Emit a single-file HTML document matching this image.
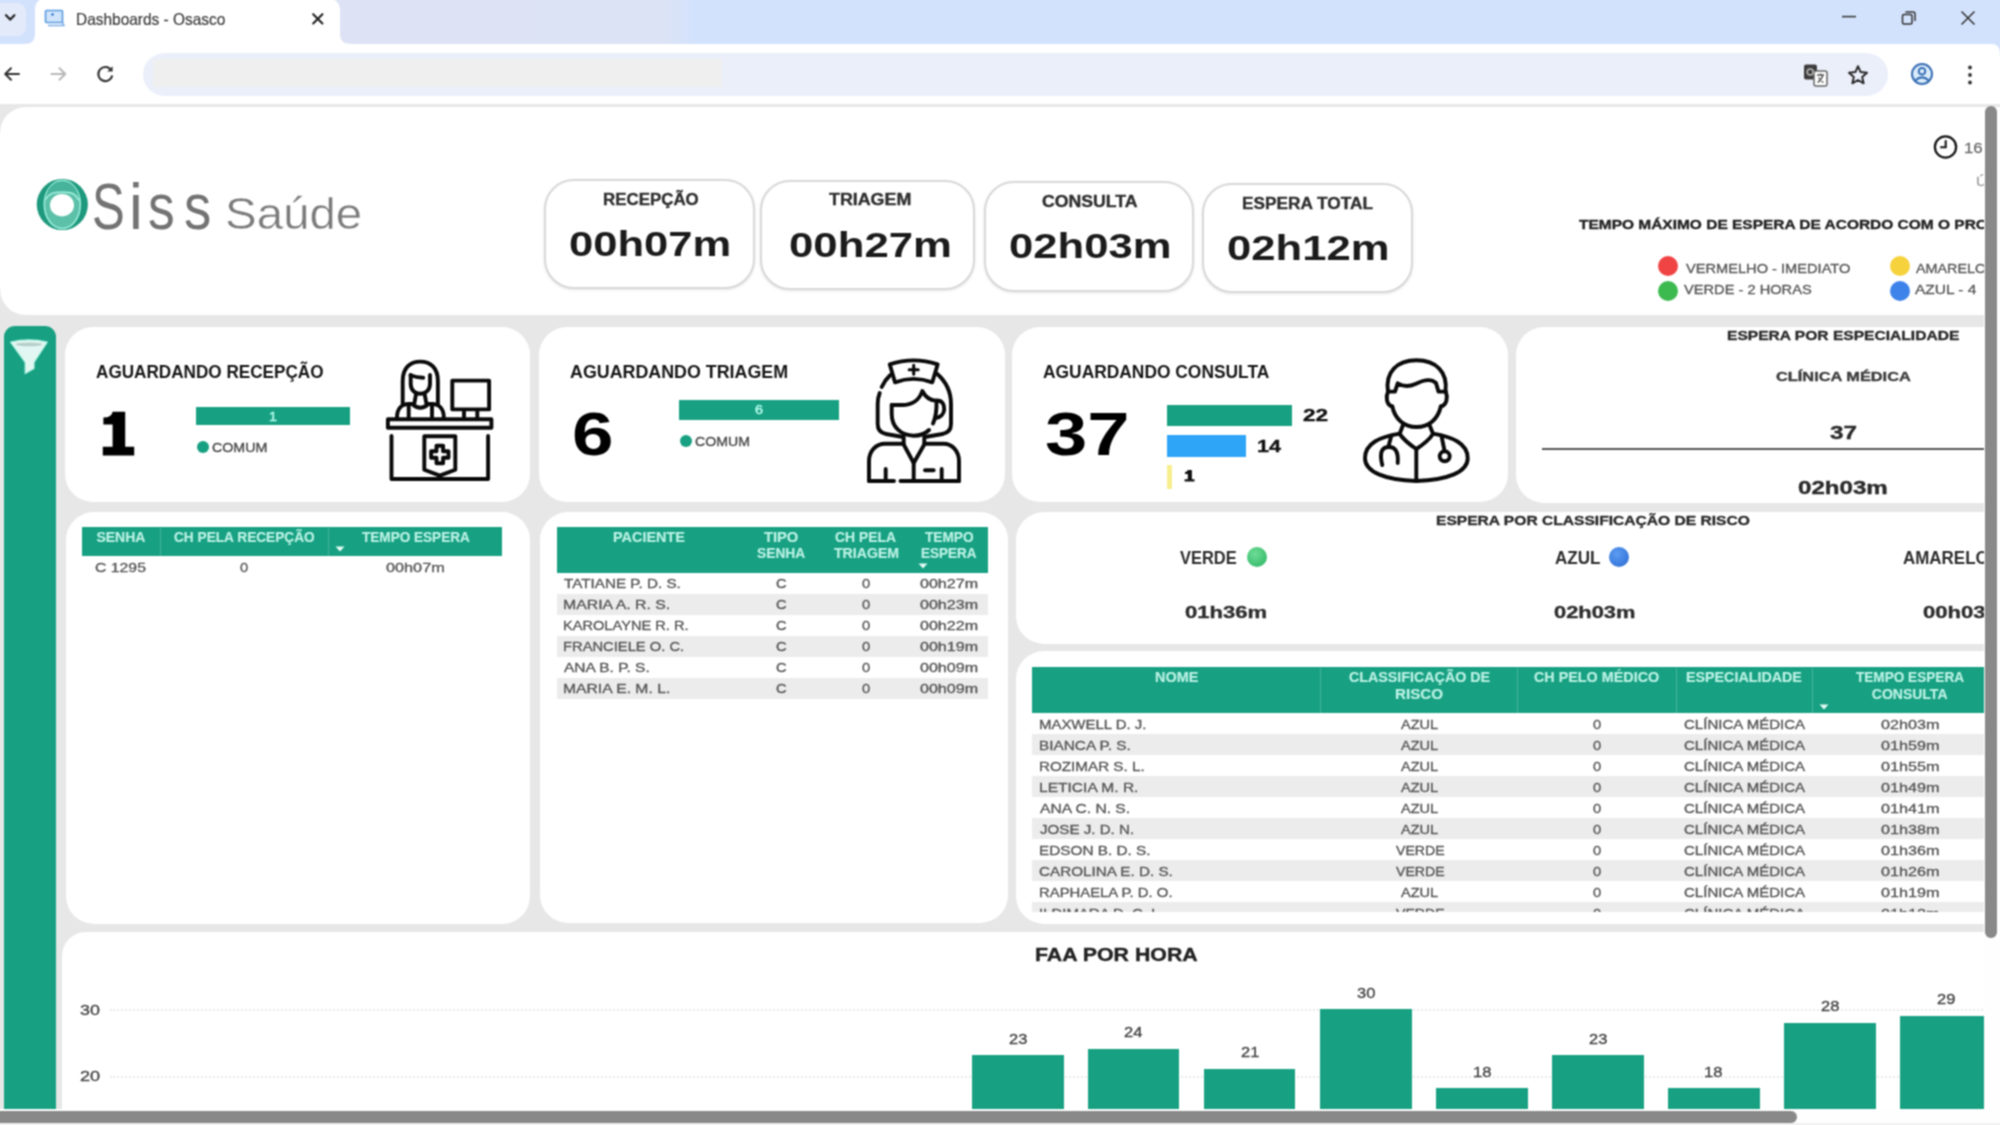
<!DOCTYPE html>
<html><head><meta charset="utf-8"><title>Dashboards - Osasco</title>
<style>
html,body{margin:0;padding:0}
body{width:2000px;height:1125px;overflow:hidden;position:relative;background:#fff;font-family:"Liberation Sans",sans-serif}
.t{position:absolute;white-space:nowrap;line-height:1;transform-origin:left top;font-family:"Liberation Sans",sans-serif}
.b{position:absolute}
svg{position:absolute;overflow:visible}
</style></head><body>
<svg width="0" height="0" style="position:absolute"><filter id="sf" x="0" y="0" width="100%" height="100%" color-interpolation-filters="sRGB"><feConvolveMatrix order="3" kernelMatrix="1 2 1 2 4 2 1 2 1" divisor="16" edgeMode="duplicate" preserveAlpha="true"/></filter></svg>
<div class="b" style="left:-8px;top:-8px;width:2016px;height:1141px;background:#fff;filter:url(#sf)"><div class="b" style="left:8px;top:8px;width:2000px;height:1125px">
<div class="b" style="left:-8.0px;top:-8.0px;width:2016.0px;height:64.0px;background:#d3e2fc;"></div>
<div class="b" style="left:330.0px;top:-8.0px;width:363.0px;height:52.0px;background:linear-gradient(90deg,#dde3f4 0,#dce3f5 92%,#d3e2fc 100%);"></div>
<div class="b" style="left:-8.0px;top:2.5px;width:34.0px;height:33.5px;background:#e3eafa;border-radius:9px"></div>
<svg style="left:4px;top:13px" width="14" height="10" viewBox="0 0 14 10"><path d="M2 2.2 L6.2 6.6 L10.4 2.2" fill="none" stroke="#222" stroke-width="2.2" stroke-linecap="round" stroke-linejoin="round"/></svg>
<svg style="left:24px;top:0" width="330" height="44" viewBox="0 0 330 44"><path d="M0 44 C8 44 11 41 11 33 L11 10 C11 3 15 -2 22 -2 L304 -2 C311 -2 316 3 316 10 L316 33 C316 41 319 44 328 44 Z" fill="#fff"/></svg>
<svg style="left:44px;top:9px" width="24" height="20" viewBox="0 0 24 20"><rect x="1.5" y="1.5" width="17" height="12" rx="1" fill="#cfe4fb" stroke="#5b9be0" stroke-width="1.6"/><path d="M4 16.5 H21 M19 13 V16" stroke="#7fb0e8" stroke-width="1.6" fill="none"/><path d="M7 5.5 h3 M8.5 4 v3" stroke="#3a7bd0" stroke-width="1.2"/></svg>
<span class="t" style="left:75.7px;top:11.0px;font-size:16.5px;color:#3d3d3d;transform:scaleX(0.936);-webkit-text-stroke:0.2px;">Dashboards - Osasco</span>
<svg style="left:311px;top:12px" width="14" height="14" viewBox="0 0 14 14"><path d="M2.2 2.2 L11.4 11.4 M11.4 2.2 L2.2 11.4" stroke="#222" stroke-width="2.1" stroke-linecap="round"/></svg>
<svg style="left:1838px;top:8px" width="140" height="22" viewBox="0 0 140 22"><path d="M4 8.6 H18" stroke="#333" stroke-width="1.5"/><rect x="64.5" y="6.5" width="9.5" height="9.5" rx="1.5" fill="none" stroke="#333" stroke-width="1.5"/><path d="M67.5 4 H75 Q77 4 77 6 V13" fill="none" stroke="#333" stroke-width="1.5"/><path d="M123.5 3.5 L136.5 16.5 M136.5 3.5 L123.5 16.5" stroke="#333" stroke-width="1.5"/></svg>
<div class="b" style="left:-8.0px;top:44.0px;width:2008.0px;height:61.0px;background:#fff;border-radius:0 8px 0 0"></div>
<div class="b" style="left:-8.0px;top:104.0px;width:2016.0px;height:2.6px;background:#e8e8e8;"></div>
<div class="b" style="left:143.0px;top:53.0px;width:1744.5px;height:43.0px;background:#ebeffa;border-radius:22px"></div>
<div class="b" style="left:153.0px;top:59.0px;width:569.0px;height:28.0px;background:#efefef;border-radius:2px"></div>
<svg style="left:2px;top:64px" width="120" height="20" viewBox="0 0 120 20"><path d="M17 10 H3.5 M9 4.3 L3.2 10 L9 15.7" fill="none" stroke="#333" stroke-width="2" stroke-linecap="round" stroke-linejoin="round"/><path d="M49.5 10 H63 M57.5 4.3 L63.3 10 L57.5 15.7" fill="none" stroke="#b9b9b9" stroke-width="2" stroke-linecap="round" stroke-linejoin="round"/><path d="M109.2 6.2 A7 7 0 1 0 110.2 11.5" fill="none" stroke="#333" stroke-width="2.1"/><path d="M110.6 2.2 V7.6 H105.2 Z" fill="#333"/></svg>
<svg style="left:1803px;top:63px" width="26" height="26" viewBox="0 0 26 26"><rect x="1" y="1.5" width="13" height="15" rx="2" fill="#3d3d3d"/><rect x="11" y="8" width="13" height="15" rx="2" fill="#fff" stroke="#666" stroke-width="1.5"/><circle cx="7.2" cy="9" r="3" fill="none" stroke="#bbb" stroke-width="1.5"/><path d="M14 12 H21 M17.5 10.5 V12 M20 12 Q18.5 17 14.5 19.5 M15.5 14.5 Q17.5 18 20.5 19.5" fill="none" stroke="#555" stroke-width="1.3"/></svg>
<svg style="left:1846px;top:63px" width="24" height="24" viewBox="0 0 24 24"><path d="M12 3.2 L14.6 9.1 L21 9.7 L16.2 14 L17.6 20.3 L12 17 L6.4 20.3 L7.8 14 L3 9.7 L9.4 9.1 Z" fill="none" stroke="#2b2b2b" stroke-width="2" stroke-linejoin="round"/></svg>
<svg style="left:1909px;top:61px" width="26" height="26" viewBox="0 0 26 26"><circle cx="13" cy="13" r="10" fill="#d9ecfb" stroke="#3a6fb4" stroke-width="2"/><circle cx="13" cy="10.3" r="3.3" fill="none" stroke="#3a6fb4" stroke-width="2"/><path d="M6.3 19.5 Q13 13.2 19.7 19.5" fill="none" stroke="#3a6fb4" stroke-width="2"/></svg>
<svg style="left:1964px;top:63px" width="12" height="24" viewBox="0 0 12 24"><circle cx="6" cy="4.5" r="1.9" fill="#333"/><circle cx="6" cy="12" r="1.9" fill="#333"/><circle cx="6" cy="19.5" r="1.9" fill="#333"/></svg>
<div class="b" style="left:-8px;top:105px;width:1992px;height:1003.6px;overflow:hidden;background:#e7e7e7">
<div class="b" style="left:8px;top:-105px;width:1984px;height:1110px">
<div class="b" style="left:0.0px;top:106.5px;width:2020.0px;height:208.5px;background:#fff;border-radius:26px"></div>
<div class="b" style="left:-8.0px;top:134.0px;width:9.0px;height:153.0px;background:#fff;"></div>
<svg style="left:32px;top:175px" width="60" height="60" viewBox="0 0 60 60"><circle cx="30.3" cy="29.5" r="25.6" fill="#1f997d"/><ellipse cx="30.3" cy="29.5" rx="18" ry="24" fill="#5dc0a9" stroke="#9cf0de" stroke-width="1.5"/><path d="M13.2 24 C16 10 23 6.2 30.3 6.2 C37.6 6.2 44.6 10 47.4 24 C42 15.5 36 17.3 30.3 17.3 C24.6 17.3 18.6 15.5 13.2 24 Z" fill="#47b39b"/><path d="M13.6 24.5 C18 16.5 24 17.3 30.3 17.3 C36.6 17.3 42.6 16.5 47 25.5" fill="none" stroke="#a6f3e2" stroke-width="1.4"/><ellipse cx="30" cy="30.2" rx="12" ry="11.2" fill="#fff"/></svg>
<span class="t" style="left:92.4px;top:174.5px;font-size:52.5px;color:#737373;transform:scale(0.936,1.235);">S</span>
<span class="t" style="left:128.6px;top:174.5px;font-size:52.5px;color:#737373;transform:scale(1.185,1.235);">i</span>
<span class="t" style="left:148.2px;top:174.5px;font-size:52.5px;color:#737373;transform:scale(1.017,1.235);">s</span>
<span class="t" style="left:184.1px;top:174.5px;font-size:52.5px;color:#737373;transform:scale(1.039,1.235);">s</span>
<span class="t" style="left:225.4px;top:191.0px;font-size:45px;color:#7b7b7b;transform:scaleX(1.054);-webkit-text-stroke:0.5px #fff;">Saúde</span>
<div class="b" style="left:544.0px;top:178.5px;width:211.0px;height:110.0px;background:#fff;border:2px solid #d8d8d8;border-radius:30px;box-sizing:border-box;box-shadow:0 1px 3px rgba(0,0,0,.10)"></div>
<div class="b" style="left:760.0px;top:179.5px;width:215.0px;height:110.5px;background:#fff;border:2px solid #d8d8d8;border-radius:30px;box-sizing:border-box;box-shadow:0 1px 3px rgba(0,0,0,.10)"></div>
<div class="b" style="left:983.5px;top:181.0px;width:210.5px;height:110.5px;background:#fff;border:2px solid #d8d8d8;border-radius:30px;box-sizing:border-box;box-shadow:0 1px 3px rgba(0,0,0,.10)"></div>
<div class="b" style="left:1202.0px;top:182.5px;width:210.5px;height:110.5px;background:#fff;border:2px solid #d8d8d8;border-radius:30px;box-sizing:border-box;box-shadow:0 1px 3px rgba(0,0,0,.10)"></div>
<span class="t" style="left:602.5px;top:192.0px;font-size:16px;font-weight:700;color:#2e2e2e;transform:scaleX(1.056);-webkit-text-stroke:0.35px;">RECEPÇÃO</span>
<span class="t" style="left:569.3px;top:226.0px;font-size:35px;font-weight:700;color:#1b1b1b;transform:scaleX(1.244);">00h07m</span>
<span class="t" style="left:829.3px;top:192.0px;font-size:16px;font-weight:700;color:#2e2e2e;transform:scaleX(1.115);-webkit-text-stroke:0.35px;">TRIAGEM</span>
<span class="t" style="left:788.5px;top:227.0px;font-size:35px;font-weight:700;color:#1b1b1b;transform:scaleX(1.250);">00h27m</span>
<span class="t" style="left:1042.2px;top:194.0px;font-size:16px;font-weight:700;color:#2e2e2e;transform:scaleX(1.105);-webkit-text-stroke:0.35px;">CONSULTA</span>
<span class="t" style="left:1009.2px;top:228.0px;font-size:35px;font-weight:700;color:#1b1b1b;transform:scaleX(1.246);">02h03m</span>
<span class="t" style="left:1241.9px;top:196.0px;font-size:16px;font-weight:700;color:#2e2e2e;transform:scaleX(1.078);-webkit-text-stroke:0.35px;">ESPERA TOTAL</span>
<span class="t" style="left:1227.2px;top:230.0px;font-size:35px;font-weight:700;color:#1b1b1b;transform:scaleX(1.246);">02h12m</span>
<svg style="left:1932px;top:134px" width="27" height="27" viewBox="0 0 27 27"><circle cx="13.5" cy="13" r="10.6" fill="none" stroke="#161616" stroke-width="2.3"/><path d="M13.7 6.2 V13.3 H8.2" fill="none" stroke="#161616" stroke-width="2.1"/></svg>
<span class="t" style="left:1964.2px;top:140.0px;font-size:15px;color:#6a6a6a;transform:scaleX(1.120);-webkit-text-stroke:0.3px;">16:32</span>
<span class="t" style="left:1975.9px;top:175.0px;font-size:13.5px;color:#9a9a9a;transform:scaleX(1.100);-webkit-text-stroke:0.3px;">Última</span>
<span class="t" style="left:1579.3px;top:218.0px;font-size:13.5px;font-weight:700;color:#222;transform:scaleX(1.146);-webkit-text-stroke:0.35px;">TEMPO MÁXIMO DE ESPERA DE ACORDO COM O PROTOCOLO</span>
<div class="b" style="left:1658.0px;top:256.2px;width:20.0px;height:20.0px;background:#f04444;border-radius:50%"></div>
<div class="b" style="left:1658.0px;top:281.2px;width:20.0px;height:20.0px;background:#3dba4f;border-radius:50%"></div>
<div class="b" style="left:1890.0px;top:256.0px;width:20.0px;height:20.0px;background:#f6d23d;border-radius:50%"></div>
<div class="b" style="left:1890.0px;top:281.0px;width:20.0px;height:20.0px;background:#3d83ea;border-radius:50%"></div>
<span class="t" style="left:1686.3px;top:262.0px;font-size:13.5px;color:#555;transform:scaleX(1.083);-webkit-text-stroke:0.3px;">VERMELHO - IMEDIATO</span>
<span class="t" style="left:1683.8px;top:283.0px;font-size:13.5px;color:#555;transform:scaleX(1.084);-webkit-text-stroke:0.3px;">VERDE - 2 HORAS</span>
<span class="t" style="left:1915.8px;top:262.0px;font-size:13.5px;color:#555;transform:scaleX(1.063);-webkit-text-stroke:0.3px;">AMARELO - 1 HORA</span>
<span class="t" style="left:1915.0px;top:283.0px;font-size:13.5px;color:#555;transform:scaleX(1.147);-webkit-text-stroke:0.3px;">AZUL - 4</span>
<div class="b" style="left:3.5px;top:326.0px;width:52.3px;height:800.0px;background:#17a082;border-radius:11px 11px 0 0"></div>
<svg style="left:0px;top:330px" width="60" height="50" viewBox="0 330 60 50"><path d="M10.6 342.2 Q29 337.6 47.2 342.2 L34 362.3 L34 368.6 L25.2 373.6 L25.2 362.3 Z" fill="#e3f7f2" stroke="#b5f3e4" stroke-width="1.2" stroke-linejoin="round"/><ellipse cx="29" cy="344.4" rx="13" ry="1.9" fill="#b7cfca"/></svg>
<div class="b" style="left:64.8px;top:327.0px;width:465.7px;height:174.5px;background:#fff;border-radius:28px"></div>
<div class="b" style="left:539.0px;top:327.0px;width:465.7px;height:174.7px;background:#fff;border-radius:28px"></div>
<div class="b" style="left:1011.5px;top:327.0px;width:496.5px;height:174.5px;background:#fff;border-radius:28px"></div>
<div class="b" style="left:1515.7px;top:326.5px;width:520.0px;height:176.0px;background:#fff;border-radius:28px"></div>
<div class="b" style="left:65.5px;top:512.0px;width:464.0px;height:411.5px;background:#fff;border-radius:28px"></div>
<div class="b" style="left:540.0px;top:511.5px;width:467.5px;height:411.5px;background:#fff;border-radius:28px"></div>
<div class="b" style="left:1015.5px;top:511.5px;width:1020.0px;height:132.5px;background:#fff;border-radius:28px"></div>
<div class="b" style="left:1015.6px;top:651.3px;width:1020.0px;height:272.4px;background:#fff;border-radius:28px"></div>
<div class="b" style="left:62.0px;top:932.0px;width:2000.0px;height:220.0px;background:#fff;border-radius:24px"></div>
<span class="t" style="left:96.3px;top:362.0px;font-size:19px;font-weight:700;color:#161616;transform:scaleX(0.902);">AGUARDANDO RECEPÇÃO</span>
<svg style="left:100px;top:408px" width="40" height="50" viewBox="100 408 40 50"><path d="M112.6 411.7 H125.2 V446.8 H134.2 V455.4 H102.8 V446.8 H112.6 V424.4 H103.4 V417.6 Q112 417.4 112.6 411.7 Z" fill="#000"/></svg>
<div class="b" style="left:196.3px;top:407.3px;width:154.2px;height:18.0px;background:#17a082;"></div>
<span class="t" style="left:269.2px;top:411.0px;font-size:12.5px;color:#b4fbea;transform:scaleX(1.150);-webkit-text-stroke:0.4px;">1</span>
<div class="b" style="left:196.5px;top:441.3px;width:12.0px;height:12.0px;background:#17a082;border-radius:50%"></div>
<span class="t" style="left:211.8px;top:441.0px;font-size:13.5px;color:#444;transform:scaleX(1.054);-webkit-text-stroke:0.3px;">COMUM</span>
<span class="t" style="left:570.1px;top:362.0px;font-size:19px;font-weight:700;color:#161616;transform:scaleX(0.939);">AGUARDANDO TRIAGEM</span>
<span class="t" style="left:571.9px;top:404.0px;font-size:61px;font-weight:700;color:#000;transform:scaleX(1.224);">6</span>
<div class="b" style="left:679.0px;top:400.0px;width:160.2px;height:19.8px;background:#17a082;"></div>
<span class="t" style="left:754.9px;top:404.0px;font-size:12.5px;color:#b4fbea;transform:scaleX(1.150);-webkit-text-stroke:0.4px;">6</span>
<div class="b" style="left:680.0px;top:435.0px;width:12.0px;height:12.0px;background:#17a082;border-radius:50%"></div>
<span class="t" style="left:695.3px;top:435.0px;font-size:13.5px;color:#444;transform:scaleX(1.048);-webkit-text-stroke:0.3px;">COMUM</span>
<span class="t" style="left:1043.3px;top:362.0px;font-size:19px;font-weight:700;color:#161616;transform:scaleX(0.915);">AGUARDANDO CONSULTA</span>
<span class="t" style="left:1044.9px;top:404.0px;font-size:61px;font-weight:700;color:#000;transform:scaleX(1.246);">37</span>
<div class="b" style="left:1166.6px;top:404.6px;width:125.0px;height:21.8px;background:#17a082;"></div>
<div class="b" style="left:1166.6px;top:435.0px;width:79.5px;height:21.5px;background:#2fa5f8;"></div>
<div class="b" style="left:1166.6px;top:465.0px;width:5.8px;height:24.3px;background:#f7ee8e;"></div>
<span class="t" style="left:1303.0px;top:408.0px;font-size:16px;font-weight:700;color:#111;transform:scaleX(1.411);-webkit-text-stroke:0.35px;">22</span>
<span class="t" style="left:1257.1px;top:439.0px;font-size:16px;font-weight:700;color:#111;transform:scaleX(1.345);-webkit-text-stroke:0.35px;">14</span>
<svg style="left:1183px;top:468px" width="14" height="16" viewBox="1183 468 14 16"><path d="M1187.8 470 H1191.9 V479.2 H1194.5 V481.6 H1184.6 V479.2 H1187.8 V474 H1185 V472.1 Q1187.6 472 1187.8 470 Z" fill="#111"/></svg>
<span class="t" style="left:1727.0px;top:329.0px;font-size:13.5px;font-weight:700;color:#2a2a2a;transform:scaleX(1.154);-webkit-text-stroke:0.35px;">ESPERA POR ESPECIALIDADE</span>
<span class="t" style="left:1775.6px;top:370.0px;font-size:13px;font-weight:700;color:#3c3c3c;transform:scaleX(1.258);-webkit-text-stroke:0.35px;">CLÍNICA MÉDICA</span>
<span class="t" style="left:1829.6px;top:425.0px;font-size:17.5px;font-weight:700;color:#2a2a2a;transform:scaleX(1.388);-webkit-text-stroke:0.35px;">37</span>
<div class="b" style="left:1542.0px;top:448.0px;width:460.0px;height:1.5px;background:#555;"></div>
<span class="t" style="left:1798.3px;top:479.0px;font-size:18px;font-weight:700;color:#2a2a2a;transform:scaleX(1.339);-webkit-text-stroke:0.35px;">02h03m</span>
<span class="t" style="left:1436.0px;top:514.0px;font-size:13.5px;font-weight:700;color:#2a2a2a;transform:scaleX(1.155);-webkit-text-stroke:0.35px;">ESPERA POR CLASSIFICAÇÃO DE RISCO</span>
<span class="t" style="left:1180.4px;top:548.0px;font-size:19px;font-weight:700;color:#2d2d2d;transform:scaleX(0.866);">VERDE</span>
<span class="t" style="left:1555.1px;top:548.0px;font-size:19px;font-weight:700;color:#2d2d2d;transform:scaleX(0.896);">AZUL</span>
<span class="t" style="left:1902.6px;top:548.0px;font-size:19px;font-weight:700;color:#2d2d2d;transform:scaleX(0.892);">AMARELO</span>
<div class="b" style="left:1246.7px;top:546.7px;width:20.0px;height:20.0px;background:radial-gradient(circle at 40% 35%,#6fdc97 0,#46c577 55%,#35b168 100%);border-radius:50%"></div>
<div class="b" style="left:1609.2px;top:546.7px;width:20.0px;height:20.0px;background:radial-gradient(circle at 40% 35%,#5d9df2 0,#3f7fe0 55%,#2f6bcb 100%);border-radius:50%"></div>
<span class="t" style="left:1184.7px;top:604.0px;font-size:16.5px;font-weight:700;color:#2d2d2d;transform:scaleX(1.336);-webkit-text-stroke:0.35px;">01h36m</span>
<span class="t" style="left:1554.2px;top:604.0px;font-size:16.5px;font-weight:700;color:#2d2d2d;transform:scaleX(1.324);-webkit-text-stroke:0.35px;">02h03m</span>
<span class="t" style="left:1923.0px;top:604.0px;font-size:16.5px;font-weight:700;color:#2d2d2d;transform:scaleX(1.336);-webkit-text-stroke:0.35px;">00h03m</span>
<svg style="left:380px;top:355px" width="120" height="130" viewBox="380 355 120 130"><g fill="none" stroke="#0a0a0a" stroke-width="3.9" stroke-linecap="round" stroke-linejoin="round"><rect x="387.9" y="419.3" width="103.5" height="8.4"/><path d="M391.5 436 V479 H488.1 V436"/><path d="M424.3 436.3 H455.3 V469.7 L439.8 475.6 L424.3 469.7 Z"/><path d="M436.5 445.8 H443.1 V451.2 H448.5 V457.8 H443.1 V463.2 H436.5 V457.8 H431.1 V451.2 H436.5 Z"/><rect x="452.3" y="380.6" width="36.8" height="28.8"/><path d="M464 411 V418 M477.3 411 V418"/><path d="M402.7 404 V381 C402.7 368 410 361.6 420.3 361.6 C430.6 361.6 437.9 368 437.9 381 V404"/><path d="M410.7 375 V384 C410.7 390 415 393.7 420.3 393.7 C425.6 393.7 430 390 430 384 V375"/><path d="M410.5 375.3 Q416 377.6 423.2 377.7"/><path d="M416 394.3 L414.3 403.5 M424.7 394.3 L426.4 403.5"/><path d="M412.3 404 Q420.3 411.5 428.4 404"/><path d="M397 417.5 C397 408.5 402 404 408.7 404 H412.3 M428.4 404 H432 C438.7 404 443.8 408.5 443.8 417.5"/><path d="M408.7 404.6 V417.7 M432 404.6 V417.7"/></g></svg>
<svg style="left:860px;top:350px" width="110" height="140" viewBox="860 350 110 140"><g fill="none" stroke="#0a0a0a" stroke-width="3.9" stroke-linecap="round" stroke-linejoin="round"><path d="M889.7 364.3 Q913.7 356.5 937.7 364.3 L932.3 382.3 Q913.7 375.5 895 382.3 Z"/><path d="M909.2 369.7 H918.2 M913.7 365.2 V374.2" stroke-width="3.1"/><path d="M890.3 375 C886.5 378.5 883.8 382.5 881.7 387 M879.7 393 C878.3 396.5 877.7 400 877.7 404 V424 C877.7 430 880.5 433 886 434 L903 437"/><path d="M937 373.7 C946.5 382 951 393 951 404 V424 C951 430 948 433 942.5 434 L925 437"/><path d="M891.7 405 H902 C912 405 919.5 400 922.3 391 C926 398 931 400.5 936 400.6"/><path d="M891.7 405 V414 C891.7 427 901 435.7 913.7 435.7 C920 435.7 925.5 433.5 929 430 M933 423.5 C936 417 936.8 410 936.5 401"/><path d="M936 400.6 C942.5 400 944.6 405 944.2 409.5 C943.8 414 940.5 417.3 936.7 417.7"/><path d="M903.7 437 V443.7 M924.3 437 V443.7"/><path d="M903.3 443.7 L913.7 463 L924.7 443.7"/><path d="M913.7 463 V481"/><path d="M902.3 443.7 H885 C876 443.7 869 451 869 461 V481 M925.7 443.7 H943.7 C952 443.7 959 451 959 461 V481"/><path d="M869 481 H894 M900.5 481 H959"/><path d="M885.7 469 V481 M941.7 469 V481 M925 470.3 H933.7"/></g></svg>
<svg style="left:1355px;top:350px" width="125" height="140" viewBox="1355 350 125 140"><g fill="none" stroke="#0a0a0a" stroke-width="3.9" stroke-linecap="round" stroke-linejoin="round"><path d="M1388 391.5 C1385 372 1397 360.3 1416.5 360.3 C1436 360.3 1448 372 1445.5 391.5"/><path d="M1388 391.6 H1395 L1397.7 383.3 C1403 386.8 1409 387 1416 383.7 C1423 380.2 1430.5 377.8 1436 383 L1438.5 391.6 H1445.7"/><path d="M1388 391.6 C1385.5 397 1386.5 405 1392.3 406.5 M1445.7 391.6 C1448 397 1447 405 1440.8 406.5"/><path d="M1392.3 406.5 C1395 419 1404 427 1416.5 427 C1429 427 1438 419 1440.8 406.5"/><path d="M1403 425 L1399.7 433.7 M1429.5 425 L1433 433.7"/><path d="M1399.7 434 Q1405 441.5 1416.3 449 Q1428 441.5 1433 434"/><path d="M1416.3 449 V481"/><path d="M1399.7 433.7 C1380 437 1365 443 1365 458.3 C1365 472 1385 480 1416.3 481 C1448 480 1467.7 472 1467.7 458.3 C1467.7 443 1452 437 1433 433.7"/><path d="M1391 437 L1388.3 447 M1382.3 465 C1379 452 1382 447 1389 447 C1396 447 1398.5 453 1397.7 463"/><path d="M1441.7 437 L1444.3 449.7"/><circle cx="1444.7" cy="456.3" r="5"/></g></svg>
<div class="b" style="left:81.5px;top:526.6px;width:420.0px;height:29.6px;background:#17a082;"></div>
<div class="b" style="left:160.0px;top:527.5px;width:1.0px;height:28.0px;background:#46b39c;"></div>
<div class="b" style="left:328.0px;top:527.5px;width:1.0px;height:28.0px;background:#46b39c;"></div>
<span class="t" style="left:96.4px;top:530.0px;font-size:14px;font-weight:700;color:#bdf2e5;-webkit-text-stroke:0.15px;">SENHA</span>
<span class="t" style="left:173.9px;top:530.0px;font-size:14px;font-weight:700;color:#bdf2e5;transform:scaleX(0.976);-webkit-text-stroke:0.15px;">CH PELA RECEPÇÃO</span>
<span class="t" style="left:361.7px;top:530.0px;font-size:14px;font-weight:700;color:#bdf2e5;transform:scaleX(0.969);-webkit-text-stroke:0.15px;">TEMPO ESPERA</span>
<svg style="left:334.8px;top:546.0px" width="10" height="6" viewBox="0 0 10 6"><path d="M0.5 0.5 H9.5 L5 5.5 Z" fill="#e6fbf5"/></svg>
<span class="t" style="left:95.4px;top:561.0px;font-size:13px;color:#545454;transform:scaleX(1.215);-webkit-text-stroke:0.3px;">C 1295</span>
<span class="t" style="left:240.1px;top:561.0px;font-size:13px;color:#545454;transform:scaleX(1.130);-webkit-text-stroke:0.3px;">0</span>
<span class="t" style="left:385.8px;top:561.0px;font-size:13px;color:#545454;transform:scaleX(1.250);-webkit-text-stroke:0.3px;">00h07m</span>
<div class="b" style="left:557.0px;top:526.6px;width:430.5px;height:46.6px;background:#17a082;"></div>
<span class="t" style="left:613.1px;top:530.0px;font-size:14px;font-weight:700;color:#bdf2e5;transform:scaleX(1.030);-webkit-text-stroke:0.15px;">PACIENTE</span>
<span class="t" style="left:764.3px;top:530.0px;font-size:14px;font-weight:700;color:#bdf2e5;transform:scaleX(1.047);-webkit-text-stroke:0.15px;">TIPO</span>
<span class="t" style="left:757.1px;top:546.0px;font-size:14px;font-weight:700;color:#bdf2e5;transform:scaleX(0.984);-webkit-text-stroke:0.15px;">SENHA</span>
<span class="t" style="left:835.1px;top:530.0px;font-size:14px;font-weight:700;color:#bdf2e5;transform:scaleX(0.991);-webkit-text-stroke:0.15px;">CH PELA</span>
<span class="t" style="left:833.7px;top:546.0px;font-size:14px;font-weight:700;color:#bdf2e5;transform:scaleX(1.008);-webkit-text-stroke:0.15px;">TRIAGEM</span>
<span class="t" style="left:925.4px;top:530.0px;font-size:14px;font-weight:700;color:#bdf2e5;transform:scaleX(0.977);-webkit-text-stroke:0.15px;">TEMPO</span>
<span class="t" style="left:921.1px;top:546.0px;font-size:14px;font-weight:700;color:#bdf2e5;transform:scaleX(0.965);-webkit-text-stroke:0.15px;">ESPERA</span>
<svg style="left:917.5px;top:563.0px" width="10" height="6" viewBox="0 0 10 6"><path d="M0.5 0.5 H9.5 L5 5.5 Z" fill="#e6fbf5"/></svg>
<span class="t" style="left:563.5px;top:577.0px;font-size:13px;color:#545454;transform:scaleX(1.172);-webkit-text-stroke:0.3px;">TATIANE P. D. S.</span>
<span class="t" style="left:775.8px;top:577.0px;font-size:13px;color:#545454;transform:scaleX(1.130);-webkit-text-stroke:0.3px;">C</span>
<span class="t" style="left:861.6px;top:577.0px;font-size:13px;color:#545454;transform:scaleX(1.130);-webkit-text-stroke:0.3px;">0</span>
<span class="t" style="left:920.2px;top:577.0px;font-size:13px;color:#545454;transform:scaleX(1.236);-webkit-text-stroke:0.3px;">00h27m</span>
<div class="b" style="left:557.0px;top:594.2px;width:430.5px;height:21.0px;background:#ececec;"></div>
<span class="t" style="left:562.5px;top:598.0px;font-size:13px;color:#545454;transform:scaleX(1.217);-webkit-text-stroke:0.3px;">MARIA A. R. S.</span>
<span class="t" style="left:775.8px;top:598.0px;font-size:13px;color:#545454;transform:scaleX(1.130);-webkit-text-stroke:0.3px;">C</span>
<span class="t" style="left:861.6px;top:598.0px;font-size:13px;color:#545454;transform:scaleX(1.130);-webkit-text-stroke:0.3px;">0</span>
<span class="t" style="left:920.2px;top:598.0px;font-size:13px;color:#545454;transform:scaleX(1.236);-webkit-text-stroke:0.3px;">00h23m</span>
<span class="t" style="left:562.6px;top:619.0px;font-size:13px;color:#545454;transform:scaleX(1.123);-webkit-text-stroke:0.3px;">KAROLAYNE R. R.</span>
<span class="t" style="left:775.8px;top:619.0px;font-size:13px;color:#545454;transform:scaleX(1.130);-webkit-text-stroke:0.3px;">C</span>
<span class="t" style="left:861.6px;top:619.0px;font-size:13px;color:#545454;transform:scaleX(1.130);-webkit-text-stroke:0.3px;">0</span>
<span class="t" style="left:920.2px;top:619.0px;font-size:13px;color:#545454;transform:scaleX(1.236);-webkit-text-stroke:0.3px;">00h22m</span>
<div class="b" style="left:557.0px;top:636.2px;width:430.5px;height:21.0px;background:#ececec;"></div>
<span class="t" style="left:562.6px;top:640.0px;font-size:13px;color:#545454;transform:scaleX(1.133);-webkit-text-stroke:0.3px;">FRANCIELE O. C.</span>
<span class="t" style="left:775.8px;top:640.0px;font-size:13px;color:#545454;transform:scaleX(1.130);-webkit-text-stroke:0.3px;">C</span>
<span class="t" style="left:861.6px;top:640.0px;font-size:13px;color:#545454;transform:scaleX(1.130);-webkit-text-stroke:0.3px;">0</span>
<span class="t" style="left:920.2px;top:640.0px;font-size:13px;color:#545454;transform:scaleX(1.236);-webkit-text-stroke:0.3px;">00h19m</span>
<span class="t" style="left:563.8px;top:661.0px;font-size:13px;color:#545454;transform:scaleX(1.190);-webkit-text-stroke:0.3px;">ANA B. P. S.</span>
<span class="t" style="left:775.8px;top:661.0px;font-size:13px;color:#545454;transform:scaleX(1.130);-webkit-text-stroke:0.3px;">C</span>
<span class="t" style="left:861.6px;top:661.0px;font-size:13px;color:#545454;transform:scaleX(1.130);-webkit-text-stroke:0.3px;">0</span>
<span class="t" style="left:920.2px;top:661.0px;font-size:13px;color:#545454;transform:scaleX(1.236);-webkit-text-stroke:0.3px;">00h09m</span>
<div class="b" style="left:557.0px;top:678.2px;width:430.5px;height:21.0px;background:#ececec;"></div>
<span class="t" style="left:562.5px;top:682.0px;font-size:13px;color:#545454;transform:scaleX(1.207);-webkit-text-stroke:0.3px;">MARIA E. M. L.</span>
<span class="t" style="left:775.8px;top:682.0px;font-size:13px;color:#545454;transform:scaleX(1.130);-webkit-text-stroke:0.3px;">C</span>
<span class="t" style="left:861.6px;top:682.0px;font-size:13px;color:#545454;transform:scaleX(1.130);-webkit-text-stroke:0.3px;">0</span>
<span class="t" style="left:920.2px;top:682.0px;font-size:13px;color:#545454;transform:scaleX(1.236);-webkit-text-stroke:0.3px;">00h09m</span>
<div class="b" style="left:0;top:660px;width:1984px;height:252.3px;overflow:hidden"><div class="b" style="left:0;top:-660px;width:1984px;height:1110px">
<div class="b" style="left:1032.3px;top:667.3px;width:960.0px;height:46.1px;background:#17a082;"></div>
<div class="b" style="left:1319.9px;top:668.0px;width:1.0px;height:45.0px;background:#46b39c;"></div>
<div class="b" style="left:1516.7px;top:668.0px;width:1.0px;height:45.0px;background:#46b39c;"></div>
<div class="b" style="left:1676.0px;top:668.0px;width:1.0px;height:45.0px;background:#46b39c;"></div>
<div class="b" style="left:1811.5px;top:668.0px;width:1.0px;height:45.0px;background:#46b39c;"></div>
<span class="t" style="left:1154.8px;top:670.0px;font-size:14px;font-weight:700;color:#bdf2e5;transform:scaleX(1.030);-webkit-text-stroke:0.15px;">NOME</span>
<span class="t" style="left:1349.0px;top:670.0px;font-size:14px;font-weight:700;color:#bdf2e5;transform:scaleX(1.019);-webkit-text-stroke:0.15px;">CLASSIFICAÇÃO DE</span>
<span class="t" style="left:1394.6px;top:687.0px;font-size:14px;font-weight:700;color:#bdf2e5;transform:scaleX(1.081);-webkit-text-stroke:0.15px;">RISCO</span>
<span class="t" style="left:1534.2px;top:670.0px;font-size:14px;font-weight:700;color:#bdf2e5;transform:scaleX(1.025);-webkit-text-stroke:0.15px;">CH PELO MÉDICO</span>
<span class="t" style="left:1686.1px;top:670.0px;font-size:14px;font-weight:700;color:#bdf2e5;transform:scaleX(1.020);-webkit-text-stroke:0.15px;">ESPECIALIDADE</span>
<span class="t" style="left:1855.8px;top:670.0px;font-size:14px;font-weight:700;color:#bdf2e5;transform:scaleX(0.971);-webkit-text-stroke:0.15px;">TEMPO ESPERA</span>
<span class="t" style="left:1871.8px;top:687.0px;font-size:14px;font-weight:700;color:#bdf2e5;-webkit-text-stroke:0.15px;">CONSULTA</span>
<svg style="left:1818.5px;top:703.5px" width="10" height="6" viewBox="0 0 10 6"><path d="M0.5 0.5 H9.5 L5 5.5 Z" fill="#e6fbf5"/></svg>
<span class="t" style="left:1038.7px;top:718.0px;font-size:13px;color:#545454;transform:scaleX(1.149);-webkit-text-stroke:0.3px;">MAXWELL D. J.</span>
<span class="t" style="left:1401.4px;top:718.0px;font-size:13px;color:#545454;transform:scaleX(1.118);-webkit-text-stroke:0.3px;">AZUL</span>
<span class="t" style="left:1593.4px;top:718.0px;font-size:13px;color:#545454;transform:scaleX(1.130);-webkit-text-stroke:0.3px;">0</span>
<span class="t" style="left:1683.6px;top:718.0px;font-size:13px;color:#545454;transform:scaleX(1.156);-webkit-text-stroke:0.3px;">CLÍNICA MÉDICA</span>
<span class="t" style="left:1880.6px;top:718.0px;font-size:13px;color:#545454;transform:scaleX(1.247);-webkit-text-stroke:0.3px;">02h03m</span>
<div class="b" style="left:1032.3px;top:734.4px;width:960.0px;height:21.0px;background:#ececec;"></div>
<span class="t" style="left:1038.7px;top:739.0px;font-size:13px;color:#545454;transform:scaleX(1.180);-webkit-text-stroke:0.3px;">BIANCA P. S.</span>
<span class="t" style="left:1401.4px;top:739.0px;font-size:13px;color:#545454;transform:scaleX(1.118);-webkit-text-stroke:0.3px;">AZUL</span>
<span class="t" style="left:1593.4px;top:739.0px;font-size:13px;color:#545454;transform:scaleX(1.130);-webkit-text-stroke:0.3px;">0</span>
<span class="t" style="left:1683.6px;top:739.0px;font-size:13px;color:#545454;transform:scaleX(1.156);-webkit-text-stroke:0.3px;">CLÍNICA MÉDICA</span>
<span class="t" style="left:1880.6px;top:739.0px;font-size:13px;color:#545454;transform:scaleX(1.247);-webkit-text-stroke:0.3px;">01h59m</span>
<span class="t" style="left:1038.7px;top:760.0px;font-size:13px;color:#545454;transform:scaleX(1.170);-webkit-text-stroke:0.3px;">ROZIMAR S. L.</span>
<span class="t" style="left:1401.4px;top:760.0px;font-size:13px;color:#545454;transform:scaleX(1.118);-webkit-text-stroke:0.3px;">AZUL</span>
<span class="t" style="left:1593.4px;top:760.0px;font-size:13px;color:#545454;transform:scaleX(1.130);-webkit-text-stroke:0.3px;">0</span>
<span class="t" style="left:1683.6px;top:760.0px;font-size:13px;color:#545454;transform:scaleX(1.156);-webkit-text-stroke:0.3px;">CLÍNICA MÉDICA</span>
<span class="t" style="left:1880.6px;top:760.0px;font-size:13px;color:#545454;transform:scaleX(1.247);-webkit-text-stroke:0.3px;">01h55m</span>
<div class="b" style="left:1032.3px;top:776.4px;width:960.0px;height:21.0px;background:#ececec;"></div>
<span class="t" style="left:1038.7px;top:781.0px;font-size:13px;color:#545454;transform:scaleX(1.197);-webkit-text-stroke:0.3px;">LETICIA M. R.</span>
<span class="t" style="left:1401.4px;top:781.0px;font-size:13px;color:#545454;transform:scaleX(1.118);-webkit-text-stroke:0.3px;">AZUL</span>
<span class="t" style="left:1593.4px;top:781.0px;font-size:13px;color:#545454;transform:scaleX(1.130);-webkit-text-stroke:0.3px;">0</span>
<span class="t" style="left:1683.6px;top:781.0px;font-size:13px;color:#545454;transform:scaleX(1.156);-webkit-text-stroke:0.3px;">CLÍNICA MÉDICA</span>
<span class="t" style="left:1880.6px;top:781.0px;font-size:13px;color:#545454;transform:scaleX(1.247);-webkit-text-stroke:0.3px;">01h49m</span>
<span class="t" style="left:1039.9px;top:802.0px;font-size:13px;color:#545454;transform:scaleX(1.199);-webkit-text-stroke:0.3px;">ANA C. N. S.</span>
<span class="t" style="left:1401.4px;top:802.0px;font-size:13px;color:#545454;transform:scaleX(1.118);-webkit-text-stroke:0.3px;">AZUL</span>
<span class="t" style="left:1593.4px;top:802.0px;font-size:13px;color:#545454;transform:scaleX(1.130);-webkit-text-stroke:0.3px;">0</span>
<span class="t" style="left:1683.6px;top:802.0px;font-size:13px;color:#545454;transform:scaleX(1.156);-webkit-text-stroke:0.3px;">CLÍNICA MÉDICA</span>
<span class="t" style="left:1880.6px;top:802.0px;font-size:13px;color:#545454;transform:scaleX(1.247);-webkit-text-stroke:0.3px;">01h41m</span>
<div class="b" style="left:1032.3px;top:818.4px;width:960.0px;height:21.0px;background:#ececec;"></div>
<span class="t" style="left:1039.7px;top:823.0px;font-size:13px;color:#545454;transform:scaleX(1.163);-webkit-text-stroke:0.3px;">JOSE J. D. N.</span>
<span class="t" style="left:1401.4px;top:823.0px;font-size:13px;color:#545454;transform:scaleX(1.118);-webkit-text-stroke:0.3px;">AZUL</span>
<span class="t" style="left:1593.4px;top:823.0px;font-size:13px;color:#545454;transform:scaleX(1.130);-webkit-text-stroke:0.3px;">0</span>
<span class="t" style="left:1683.6px;top:823.0px;font-size:13px;color:#545454;transform:scaleX(1.156);-webkit-text-stroke:0.3px;">CLÍNICA MÉDICA</span>
<span class="t" style="left:1880.6px;top:823.0px;font-size:13px;color:#545454;transform:scaleX(1.247);-webkit-text-stroke:0.3px;">01h38m</span>
<span class="t" style="left:1038.7px;top:844.0px;font-size:13px;color:#545454;transform:scaleX(1.178);-webkit-text-stroke:0.3px;">EDSON B. D. S.</span>
<span class="t" style="left:1395.7px;top:844.0px;font-size:13px;color:#545454;transform:scaleX(1.087);-webkit-text-stroke:0.3px;">VERDE</span>
<span class="t" style="left:1593.4px;top:844.0px;font-size:13px;color:#545454;transform:scaleX(1.130);-webkit-text-stroke:0.3px;">0</span>
<span class="t" style="left:1683.6px;top:844.0px;font-size:13px;color:#545454;transform:scaleX(1.156);-webkit-text-stroke:0.3px;">CLÍNICA MÉDICA</span>
<span class="t" style="left:1880.6px;top:844.0px;font-size:13px;color:#545454;transform:scaleX(1.247);-webkit-text-stroke:0.3px;">01h36m</span>
<div class="b" style="left:1032.3px;top:860.4px;width:960.0px;height:21.0px;background:#ececec;"></div>
<span class="t" style="left:1039.1px;top:865.0px;font-size:13px;color:#545454;transform:scaleX(1.172);-webkit-text-stroke:0.3px;">CAROLINA E. D. S.</span>
<span class="t" style="left:1395.7px;top:865.0px;font-size:13px;color:#545454;transform:scaleX(1.087);-webkit-text-stroke:0.3px;">VERDE</span>
<span class="t" style="left:1593.4px;top:865.0px;font-size:13px;color:#545454;transform:scaleX(1.130);-webkit-text-stroke:0.3px;">0</span>
<span class="t" style="left:1683.6px;top:865.0px;font-size:13px;color:#545454;transform:scaleX(1.156);-webkit-text-stroke:0.3px;">CLÍNICA MÉDICA</span>
<span class="t" style="left:1880.6px;top:865.0px;font-size:13px;color:#545454;transform:scaleX(1.247);-webkit-text-stroke:0.3px;">01h26m</span>
<span class="t" style="left:1038.7px;top:886.0px;font-size:13px;color:#545454;transform:scaleX(1.143);-webkit-text-stroke:0.3px;">RAPHAELA P. D. O.</span>
<span class="t" style="left:1401.4px;top:886.0px;font-size:13px;color:#545454;transform:scaleX(1.118);-webkit-text-stroke:0.3px;">AZUL</span>
<span class="t" style="left:1593.4px;top:886.0px;font-size:13px;color:#545454;transform:scaleX(1.130);-webkit-text-stroke:0.3px;">0</span>
<span class="t" style="left:1683.6px;top:886.0px;font-size:13px;color:#545454;transform:scaleX(1.156);-webkit-text-stroke:0.3px;">CLÍNICA MÉDICA</span>
<span class="t" style="left:1880.6px;top:886.0px;font-size:13px;color:#545454;transform:scaleX(1.247);-webkit-text-stroke:0.3px;">01h19m</span>
<div class="b" style="left:1032.3px;top:902.4px;width:960.0px;height:21.0px;background:#ececec;"></div>
<span class="t" style="left:1038.6px;top:907.0px;font-size:13px;color:#545454;transform:scaleX(1.150);-webkit-text-stroke:0.3px;">ILDIMARA D. C. L.</span>
<span class="t" style="left:1395.7px;top:907.0px;font-size:13px;color:#545454;transform:scaleX(1.087);-webkit-text-stroke:0.3px;">VERDE</span>
<span class="t" style="left:1593.4px;top:907.0px;font-size:13px;color:#545454;transform:scaleX(1.130);-webkit-text-stroke:0.3px;">0</span>
<span class="t" style="left:1683.6px;top:907.0px;font-size:13px;color:#545454;transform:scaleX(1.156);-webkit-text-stroke:0.3px;">CLÍNICA MÉDICA</span>
<span class="t" style="left:1880.6px;top:907.0px;font-size:13px;color:#545454;transform:scaleX(1.247);-webkit-text-stroke:0.3px;">01h12m</span>
</div></div>
<span class="t" style="left:1035.3px;top:946.0px;font-size:18px;font-weight:700;color:#222;transform:scaleX(1.185);-webkit-text-stroke:0.35px;">FAA POR HORA</span>
<span class="t" style="left:80.4px;top:1002.0px;font-size:15px;color:#444;transform:scaleX(1.192);-webkit-text-stroke:0.3px;">30</span>
<span class="t" style="left:80.1px;top:1068.0px;font-size:15px;color:#444;transform:scaleX(1.210);-webkit-text-stroke:0.3px;">20</span>
<div class="b" style="left:110px;top:1008.5px;width:1880px;height:0;border-top:2px dotted #e9e9e9"></div>
<div class="b" style="left:110px;top:1075.5px;width:1880px;height:0;border-top:2px dotted #e9e9e9"></div>
<div class="b" style="left:972.0px;top:1055.4px;width:91.6px;height:53.4px;background:#17a082;"></div>
<span class="t" style="left:1008.6px;top:1031.0px;font-size:15px;color:#3f3f3f;transform:scaleX(1.100);-webkit-text-stroke:0.3px;">23</span>
<div class="b" style="left:1087.8px;top:1048.8px;width:91.6px;height:60.0px;background:#17a082;"></div>
<span class="t" style="left:1124.2px;top:1024.0px;font-size:15px;color:#3f3f3f;transform:scaleX(1.100);-webkit-text-stroke:0.3px;">24</span>
<div class="b" style="left:1203.9px;top:1068.5px;width:91.6px;height:40.3px;background:#17a082;"></div>
<span class="t" style="left:1240.5px;top:1044.0px;font-size:15px;color:#3f3f3f;transform:scaleX(1.100);-webkit-text-stroke:0.3px;">21</span>
<div class="b" style="left:1320.0px;top:1009.4px;width:91.6px;height:99.4px;background:#17a082;"></div>
<span class="t" style="left:1356.6px;top:985.0px;font-size:15px;color:#3f3f3f;transform:scaleX(1.100);-webkit-text-stroke:0.3px;">30</span>
<div class="b" style="left:1436.3px;top:1088.2px;width:91.6px;height:20.6px;background:#17a082;"></div>
<span class="t" style="left:1472.7px;top:1064.0px;font-size:15px;color:#3f3f3f;transform:scaleX(1.100);-webkit-text-stroke:0.3px;">18</span>
<div class="b" style="left:1552.3px;top:1055.4px;width:91.6px;height:53.4px;background:#17a082;"></div>
<span class="t" style="left:1588.9px;top:1031.0px;font-size:15px;color:#3f3f3f;transform:scaleX(1.100);-webkit-text-stroke:0.3px;">23</span>
<div class="b" style="left:1668.0px;top:1088.2px;width:91.6px;height:20.6px;background:#17a082;"></div>
<span class="t" style="left:1704.4px;top:1064.0px;font-size:15px;color:#3f3f3f;transform:scaleX(1.100);-webkit-text-stroke:0.3px;">18</span>
<div class="b" style="left:1784.2px;top:1022.5px;width:91.6px;height:86.3px;background:#17a082;"></div>
<span class="t" style="left:1820.8px;top:998.0px;font-size:15px;color:#3f3f3f;transform:scaleX(1.100);-webkit-text-stroke:0.3px;">28</span>
<div class="b" style="left:1900.2px;top:1016.0px;width:91.6px;height:92.8px;background:#17a082;"></div>
<span class="t" style="left:1936.8px;top:991.0px;font-size:15px;color:#3f3f3f;transform:scaleX(1.100);-webkit-text-stroke:0.3px;">29</span>
</div></div>
<div class="b" style="left:1984.0px;top:106.5px;width:24.0px;height:1030.0px;background:#fefefe;"></div>
<div class="b" style="left:-8.0px;top:1108.6px;width:2016.0px;height:30.0px;background:#fefefe;"></div>
<div class="b" style="left:1985.4px;top:106.0px;width:11.6px;height:832.0px;background:#898989;border-radius:5.8px"></div>
<div class="b" style="left:-10.0px;top:1111.0px;width:1807.2px;height:11.8px;background:#898989;border-radius:5.9px"></div>
<div class="b" style="left:-8.0px;top:1123.2px;width:2016.0px;height:12.0px;background:#f1f1f1;"></div>
</div></div>
</body></html>
